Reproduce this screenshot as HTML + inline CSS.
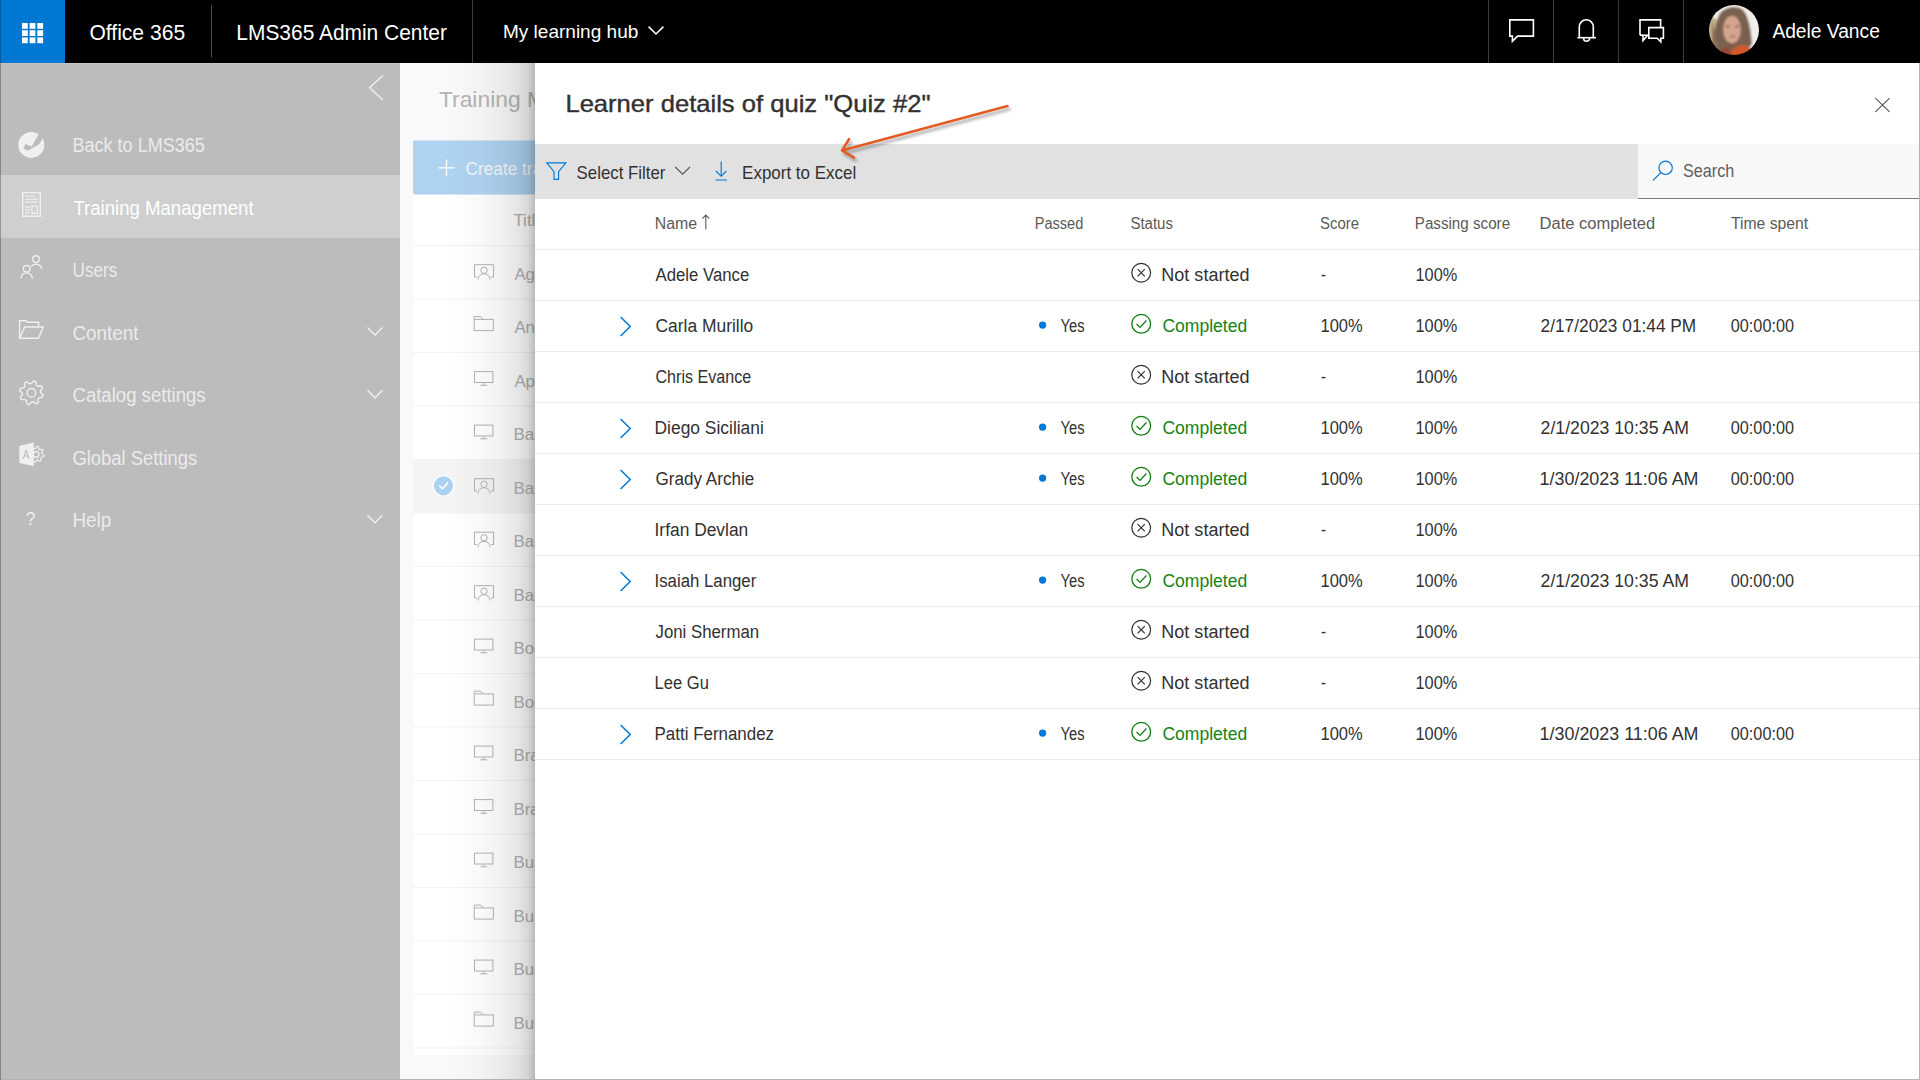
<!DOCTYPE html><html><head><meta charset="utf-8"><title>Learner details</title><style>html,body{margin:0;padding:0;width:1920px;height:1080px;overflow:hidden;background:#fff}svg{display:block;font-family:"Liberation Sans",sans-serif}</style></head><body>
<svg width="1920" height="1080" viewBox="0 0 1920 1080">
<defs>
<linearGradient id="sh" x1="0" x2="1" y1="0" y2="0">
<stop offset="0" stop-color="#000" stop-opacity="0"/>
<stop offset="0.35" stop-color="#000" stop-opacity="0.025"/>
<stop offset="0.6" stop-color="#000" stop-opacity="0.055"/>
<stop offset="0.8" stop-color="#000" stop-opacity="0.10"/>
<stop offset="0.92" stop-color="#000" stop-opacity="0.16"/>
<stop offset="1" stop-color="#000" stop-opacity="0.27"/>
</linearGradient>
<filter id="avblur" x="-20%" y="-20%" width="140%" height="140%"><feGaussianBlur stdDeviation="0.9"/></filter>
<clipPath id="avc"><circle cx="1734" cy="30" r="25"/></clipPath>
<clipPath id="cclip"><rect x="400" y="63" width="135" height="1017"/></clipPath>
<filter id="ash" x="-10%" y="-30%" width="130%" height="180%"><feGaussianBlur in="SourceAlpha" stdDeviation="1.8"/><feOffset dx="1.5" dy="2.5"/><feComponentTransfer><feFuncA type="linear" slope="0.35"/></feComponentTransfer><feMerge><feMergeNode/><feMergeNode in="SourceGraphic"/></feMerge></filter>
</defs>
<rect x="0" y="63" width="400" height="1017" fill="#bcbcbc"/>
<rect x="0" y="175" width="400" height="63" fill="#cfcfcf"/>
<rect x="0" y="63" width="400" height="1" fill="#c9c5c1"/>
<g fill="none" stroke="#f0f0f0" stroke-width="1.4">
<polyline points="383,75.5 369.5,87.8 383,100"/>
<polyline points="367.5,327.5 375,335.0 382.5,327.5"/>
<polyline points="367.5,390.2 375,397.7 382.5,390.2"/>
<polyline points="367.5,515.2 375,522.7 382.5,515.2"/>
<rect x="22.7" y="192.6" width="17.6" height="23.6" stroke-width="1.4"/>
<path d="M25 196.2H35M25 199.2H38M25 202.2H38M25 207.2H30M25 210.2H30M25 213H30" stroke-width="1.2"/>
<rect x="31.9" y="206.1" width="5.4" height="7.2" stroke-width="1.3"/>
<circle cx="26.7" cy="268.7" r="3.3"/><path d="M20.9,278.6 A5.7,5.7 0 0 1 32.3,278.6"/>
<circle cx="36" cy="259.1" r="3.3"/><path d="M31.3,266.7 A5.8,5.8 0 0 1 41.8,268.9"/>
<path d="M19.6,338.3 V320.8 H26 L27.3,322.2 H38.6 V326.6"/><path d="M19.8,338.2 L24.6,327 H43.4 L38.4,338.2 Z"/>
<polygon points="43.21,394.95 42.56,397.21 39.13,397.79 38.01,399.20 38.23,402.67 36.17,403.81 33.34,401.79 31.55,402.00 29.25,404.61 26.99,403.96 26.41,400.53 25.00,399.41 21.53,399.63 20.39,397.57 22.41,394.74 22.20,392.95 19.59,390.65 20.24,388.39 23.67,387.81 24.79,386.40 24.57,382.93 26.63,381.79 29.46,383.81 31.25,383.60 33.55,380.99 35.81,381.64 36.39,385.07 37.80,386.19 41.27,385.97 42.41,388.03 40.39,390.86 40.60,392.65" stroke-linejoin="round"/>
<circle cx="31.4" cy="392.8" r="4.3"/>
<circle cx="36" cy="454.4" r="2.9"/>
</g>
<polygon points="43.96,455.20 43.65,456.74 41.29,457.24 40.63,458.21 41.06,460.59 39.76,461.46 37.73,460.14 36.58,460.37 35.20,462.36 33.66,462.05 33.16,459.69 32.19,459.03 29.81,459.46 28.94,458.16 30.26,456.13 30.03,454.98 28.04,453.60 28.35,452.06 30.71,451.56 31.37,450.59 30.94,448.21 32.24,447.34 34.27,448.66 35.42,448.43 36.80,446.44 38.34,446.75 38.84,449.11 39.81,449.77 42.19,449.34 43.06,450.64 41.74,452.67 41.97,453.82" fill="none" stroke="#f0f0f0" stroke-width="1.2" stroke-linejoin="round"/>
<polygon points="19.35,445.9 33.67,442.4 33.67,466.3 19.35,462.9" fill="#f0f0f0"/>
<path d="M23.3,458.8 L26.1,450 L28.9,458.8 M24.2,456 H28" fill="none" stroke="#b0b0b0" stroke-width="0.9"/>
<circle cx="31.3" cy="144.9" r="13" fill="#f0f0f0"/>
<polygon points="38.56,134.61 31.63,146.58 25.33,144.06 23.45,148.47 27.54,150.67 39.19,144.37 42.34,139.02 46,133 40,128" fill="#bcbcbc"/>
<text x="25.8" y="525.2" font-size="17.5" fill="#f0f0f0">?</text>
<text x="72.50" y="152.00" font-size="20" fill="#ebebeb" textLength="132.31" lengthAdjust="spacingAndGlyphs">Back to LMS365</text><text x="73.40" y="214.50" font-size="20" fill="#ffffff" textLength="180.19" lengthAdjust="spacingAndGlyphs">Training Management</text><text x="72.54" y="277.00" font-size="20" fill="#ebebeb" textLength="44.66" lengthAdjust="spacingAndGlyphs">Users</text><text x="72.46" y="339.50" font-size="20" fill="#ebebeb" textLength="66.02" lengthAdjust="spacingAndGlyphs">Content</text><text x="72.47" y="402.00" font-size="20" fill="#ebebeb" textLength="133.13" lengthAdjust="spacingAndGlyphs">Catalog settings</text><text x="72.48" y="464.50" font-size="20" fill="#ebebeb" textLength="124.72" lengthAdjust="spacingAndGlyphs">Global Settings</text><text x="72.46" y="527.00" font-size="20" fill="#ebebeb" textLength="38.76" lengthAdjust="spacingAndGlyphs">Help</text>
<g clip-path="url(#cclip)">
<rect x="400" y="63" width="135" height="1017" fill="#f9f9f9"/>
<rect x="413" y="195" width="140" height="860" fill="#ffffff"/>
<rect x="413" y="140.5" width="140" height="54" rx="2" fill="#aed3f1"/>
<path d="M438.4,167.8H454.6M446.5,159.6V176" stroke="#fff" stroke-width="1.3"/>
<rect x="413" y="298.5" width="130" height="1" fill="#f4f4f4"/>
<rect x="413" y="352.0" width="130" height="1" fill="#f4f4f4"/>
<rect x="413" y="405.5" width="130" height="1" fill="#f4f4f4"/>
<rect x="413" y="459.0" width="130" height="1" fill="#f4f4f4"/>
<rect x="413" y="512.5" width="130" height="1" fill="#f4f4f4"/>
<rect x="413" y="566.0" width="130" height="1" fill="#f4f4f4"/>
<rect x="413" y="619.5" width="130" height="1" fill="#f4f4f4"/>
<rect x="413" y="673.0" width="130" height="1" fill="#f4f4f4"/>
<rect x="413" y="726.5" width="130" height="1" fill="#f4f4f4"/>
<rect x="413" y="780.0" width="130" height="1" fill="#f4f4f4"/>
<rect x="413" y="833.5" width="130" height="1" fill="#f4f4f4"/>
<rect x="413" y="887.0" width="130" height="1" fill="#f4f4f4"/>
<rect x="413" y="940.5" width="130" height="1" fill="#f4f4f4"/>
<rect x="413" y="994.0" width="130" height="1" fill="#f4f4f4"/>
<rect x="413" y="1047.5" width="130" height="1" fill="#f4f4f4"/>
<rect x="413" y="245" width="130" height="1" fill="#f1f1f1"/>
<rect x="413" y="459.5" width="130" height="53.5" fill="#f4f4f4"/>
<circle cx="443.5" cy="485.8" r="11" fill="#fff"/><circle cx="443.5" cy="485.8" r="9.6" fill="#abd1f1"/>
<polyline points="439.3,485.6 442.5,488.7 448,482.6" fill="none" stroke="#fff" stroke-width="1.6"/>
<g fill="none" stroke="#b3b3b3" stroke-width="1.0">
<path d="M477,277.0 H474.5 V264.7 H493.6 V277.0 H491"/><circle cx="484" cy="270.3" r="3.2"/><path d="M478,279.5 A6,5.8 0 0 1 490,279.5"/>
<path d="M474.2,330.6 V316.6 H480.8 L483.2,319.4 H493.4 V330.6 Z M474.2,319.4 H483.2"/>
<rect x="474.5" y="371.6" width="18.4" height="10.9"/><path d="M483.7,382.5 V385.1 M480.3,385.3 H487.1"/>
<rect x="474.5" y="425.1" width="18.4" height="10.9"/><path d="M483.7,436.0 V438.6 M480.3,438.8 H487.1"/>
<path d="M477,491.0 H474.5 V478.7 H493.6 V491.0 H491"/><circle cx="484" cy="484.3" r="3.2"/><path d="M478,493.5 A6,5.8 0 0 1 490,493.5"/>
<path d="M477,544.5 H474.5 V532.2 H493.6 V544.5 H491"/><circle cx="484" cy="537.8" r="3.2"/><path d="M478,547.0 A6,5.8 0 0 1 490,547.0"/>
<path d="M477,598.0 H474.5 V585.7 H493.6 V598.0 H491"/><circle cx="484" cy="591.3" r="3.2"/><path d="M478,600.5 A6,5.8 0 0 1 490,600.5"/>
<rect x="474.5" y="639.1" width="18.4" height="10.9"/><path d="M483.7,650.0 V652.6 M480.3,652.8 H487.1"/>
<path d="M474.2,705.1 V691.1 H480.8 L483.2,693.9 H493.4 V705.1 Z M474.2,693.9 H483.2"/>
<rect x="474.5" y="746.1" width="18.4" height="10.9"/><path d="M483.7,757.0 V759.6 M480.3,759.8 H487.1"/>
<rect x="474.5" y="799.6" width="18.4" height="10.9"/><path d="M483.7,810.5 V813.1 M480.3,813.3 H487.1"/>
<rect x="474.5" y="853.1" width="18.4" height="10.9"/><path d="M483.7,864.0 V866.6 M480.3,866.8 H487.1"/>
<path d="M474.2,919.1 V905.1 H480.8 L483.2,907.9 H493.4 V919.1 Z M474.2,907.9 H483.2"/>
<rect x="474.5" y="960.1" width="18.4" height="10.9"/><path d="M483.7,971.0 V973.6 M480.3,973.8 H487.1"/>
<path d="M474.2,1026.1 V1012.1 H480.8 L483.2,1014.9 H493.4 V1026.1 Z M474.2,1014.9 H483.2"/>
</g>
<text x="438.90" y="106.90" font-size="22" fill="#b4b4b4" textLength="221.72" lengthAdjust="spacingAndGlyphs">Training Management</text><text x="465.60" y="174.80" font-size="18.5" fill="#f4f8fc" textLength="112.85" lengthAdjust="spacingAndGlyphs">Create training</text><text x="513.40" y="225.70" font-size="16" fill="#b0b0b0" textLength="31.41" lengthAdjust="spacingAndGlyphs">Title</text><text x="514.40" y="279.70" font-size="17" fill="#b2b2b2" textLength="37.42" lengthAdjust="spacingAndGlyphs">Agile</text><text x="514.40" y="333.20" font-size="17" fill="#b2b2b2" textLength="121.63" lengthAdjust="spacingAndGlyphs">Announcements</text><text x="514.40" y="386.70" font-size="17" fill="#b2b2b2" textLength="38.36" lengthAdjust="spacingAndGlyphs">Apps</text><text x="513.41" y="440.20" font-size="17" fill="#b2b2b2" textLength="49.57" lengthAdjust="spacingAndGlyphs">Basics</text><text x="513.41" y="493.70" font-size="17" fill="#b2b2b2" textLength="49.57" lengthAdjust="spacingAndGlyphs">Basics</text><text x="513.41" y="547.20" font-size="17" fill="#b2b2b2" textLength="49.57" lengthAdjust="spacingAndGlyphs">Basics</text><text x="513.41" y="600.70" font-size="17" fill="#b2b2b2" textLength="49.57" lengthAdjust="spacingAndGlyphs">Basics</text><text x="513.41" y="654.20" font-size="17" fill="#b2b2b2" textLength="46.78" lengthAdjust="spacingAndGlyphs">Books</text><text x="513.41" y="707.70" font-size="17" fill="#b2b2b2" textLength="46.78" lengthAdjust="spacingAndGlyphs">Books</text><text x="513.41" y="761.20" font-size="17" fill="#b2b2b2" textLength="44.91" lengthAdjust="spacingAndGlyphs">Brand</text><text x="513.41" y="814.70" font-size="17" fill="#b2b2b2" textLength="44.91" lengthAdjust="spacingAndGlyphs">Brand</text><text x="513.41" y="868.20" font-size="17" fill="#b2b2b2" textLength="68.29" lengthAdjust="spacingAndGlyphs">Business</text><text x="513.41" y="921.70" font-size="17" fill="#b2b2b2" textLength="68.29" lengthAdjust="spacingAndGlyphs">Business</text><text x="513.41" y="975.20" font-size="17" fill="#b2b2b2" textLength="68.29" lengthAdjust="spacingAndGlyphs">Business</text><text x="513.41" y="1028.70" font-size="17" fill="#b2b2b2" textLength="68.29" lengthAdjust="spacingAndGlyphs">Business</text>
<rect x="400" y="1055" width="135" height="25" fill="#f9f9f9"/>
<rect x="450" y="63" width="85" height="1017" fill="url(#sh)"/>
</g>
<rect x="535" y="63" width="1385" height="1017" fill="#fff"/>
<rect x="535" y="144" width="1103" height="55" fill="#e1e1e1"/>
<rect x="1638" y="144" width="281" height="55" rx="2" fill="#f8f8f8"/>
<rect x="1638" y="198" width="281" height="1" fill="#7a7a7a"/>
<path d="M1875.4,98.1 L1889.6,111.9 M1889.6,98.1 L1875.4,111.9" stroke="#5a5856" stroke-width="1.15"/>
<g fill="none" stroke="#0078d4" stroke-width="1.15">
<path d="M546.8,162.8 H565.8 L558.6,171.6 V179.4 H554 V171.6 Z" stroke-linejoin="miter"/>
<path d="M721.2,161.5 V176.2 M716,171 L721.2,176.3 L726.4,171 M715.5,180 H727"/>
<circle cx="1665.6" cy="167.8" r="6.7" stroke-width="1.2"/><path d="M1660.8,172.6 L1653,180.4" stroke-width="1.3"/>
</g>
<polyline points="675.2,167 682.6,174.2 690,167" fill="none" stroke="#5a5856" stroke-width="1.1"/>
<path d="M705.8,215 V229.6 M702.3,218.6 L705.8,215 L709.3,218.6" fill="none" stroke="#5c5a58" stroke-width="1.1"/>
<rect x="535" y="249.0" width="1384" height="1" fill="#edebe9"/>
<rect x="535" y="300.0" width="1384" height="1" fill="#edebe9"/>
<rect x="535" y="351.0" width="1384" height="1" fill="#edebe9"/>
<rect x="535" y="402.0" width="1384" height="1" fill="#edebe9"/>
<rect x="535" y="453.0" width="1384" height="1" fill="#edebe9"/>
<rect x="535" y="504.0" width="1384" height="1" fill="#edebe9"/>
<rect x="535" y="555.0" width="1384" height="1" fill="#edebe9"/>
<rect x="535" y="606.0" width="1384" height="1" fill="#edebe9"/>
<rect x="535" y="657.0" width="1384" height="1" fill="#edebe9"/>
<rect x="535" y="708.0" width="1384" height="1" fill="#edebe9"/>
<rect x="535" y="759.0" width="1384" height="1" fill="#edebe9"/>
<circle cx="1141.2" cy="272.8" r="9.4" fill="none" stroke="#323130" stroke-width="1.2"/>
<path d="M1137.6,269.2 L1144.8,276.4 M1144.8,269.2 L1137.6,276.4" stroke="#323130" stroke-width="1.2"/>
<polyline points="620.6,317.0 630.2,326.5 620.6,336.0" fill="none" stroke="#0078d4" stroke-width="1.5"/>
<circle cx="1042.6" cy="325.1" r="3.6" fill="#0078d4"/>
<circle cx="1141.2" cy="323.8" r="9.4" fill="none" stroke="#107c10" stroke-width="1.3"/>
<polyline points="1136.6,324.0 1140,327.4 1146.4,320.5" fill="none" stroke="#107c10" stroke-width="1.3"/>
<circle cx="1141.2" cy="374.8" r="9.4" fill="none" stroke="#323130" stroke-width="1.2"/>
<path d="M1137.6,371.2 L1144.8,378.4 M1144.8,371.2 L1137.6,378.4" stroke="#323130" stroke-width="1.2"/>
<polyline points="620.6,419.0 630.2,428.5 620.6,438.0" fill="none" stroke="#0078d4" stroke-width="1.5"/>
<circle cx="1042.6" cy="427.1" r="3.6" fill="#0078d4"/>
<circle cx="1141.2" cy="425.8" r="9.4" fill="none" stroke="#107c10" stroke-width="1.3"/>
<polyline points="1136.6,426.0 1140,429.4 1146.4,422.5" fill="none" stroke="#107c10" stroke-width="1.3"/>
<polyline points="620.6,470.0 630.2,479.5 620.6,489.0" fill="none" stroke="#0078d4" stroke-width="1.5"/>
<circle cx="1042.6" cy="478.1" r="3.6" fill="#0078d4"/>
<circle cx="1141.2" cy="476.8" r="9.4" fill="none" stroke="#107c10" stroke-width="1.3"/>
<polyline points="1136.6,477.0 1140,480.4 1146.4,473.5" fill="none" stroke="#107c10" stroke-width="1.3"/>
<circle cx="1141.2" cy="527.8" r="9.4" fill="none" stroke="#323130" stroke-width="1.2"/>
<path d="M1137.6,524.2 L1144.8,531.4 M1144.8,524.2 L1137.6,531.4" stroke="#323130" stroke-width="1.2"/>
<polyline points="620.6,572.0 630.2,581.5 620.6,591.0" fill="none" stroke="#0078d4" stroke-width="1.5"/>
<circle cx="1042.6" cy="580.1" r="3.6" fill="#0078d4"/>
<circle cx="1141.2" cy="578.8" r="9.4" fill="none" stroke="#107c10" stroke-width="1.3"/>
<polyline points="1136.6,579.0 1140,582.4 1146.4,575.5" fill="none" stroke="#107c10" stroke-width="1.3"/>
<circle cx="1141.2" cy="629.8" r="9.4" fill="none" stroke="#323130" stroke-width="1.2"/>
<path d="M1137.6,626.2 L1144.8,633.4 M1144.8,626.2 L1137.6,633.4" stroke="#323130" stroke-width="1.2"/>
<circle cx="1141.2" cy="680.8" r="9.4" fill="none" stroke="#323130" stroke-width="1.2"/>
<path d="M1137.6,677.2 L1144.8,684.4 M1144.8,677.2 L1137.6,684.4" stroke="#323130" stroke-width="1.2"/>
<polyline points="620.6,725.0 630.2,734.5 620.6,744.0" fill="none" stroke="#0078d4" stroke-width="1.5"/>
<circle cx="1042.6" cy="733.1" r="3.6" fill="#0078d4"/>
<circle cx="1141.2" cy="731.8" r="9.4" fill="none" stroke="#107c10" stroke-width="1.3"/>
<polyline points="1136.6,732.0 1140,735.4 1146.4,728.5" fill="none" stroke="#107c10" stroke-width="1.3"/>
<text x="565.43" y="111.90" font-size="24" fill="#323130" textLength="365.12" lengthAdjust="spacingAndGlyphs" stroke="#323130" stroke-width="0.4">Learner details of quiz "Quiz #2"</text><text x="576.60" y="179.00" font-size="18.5" fill="#323130" textLength="88.75" lengthAdjust="spacingAndGlyphs">Select Filter</text><text x="742.08" y="179.00" font-size="18.5" fill="#323130" textLength="114.14" lengthAdjust="spacingAndGlyphs">Export to Excel</text><text x="1683.00" y="176.90" font-size="18" fill="#605e5c" textLength="51.21" lengthAdjust="spacingAndGlyphs">Search</text><text x="654.71" y="228.80" font-size="16" fill="#5c5a58" textLength="42.39" lengthAdjust="spacingAndGlyphs">Name</text><text x="1034.69" y="228.80" font-size="16" fill="#5c5a58" textLength="48.63" lengthAdjust="spacingAndGlyphs">Passed</text><text x="1130.40" y="228.80" font-size="16" fill="#5c5a58" textLength="42.60" lengthAdjust="spacingAndGlyphs">Status</text><text x="1320.00" y="228.80" font-size="16" fill="#5c5a58" textLength="38.91" lengthAdjust="spacingAndGlyphs">Score</text><text x="1414.75" y="228.80" font-size="16" fill="#5c5a58" textLength="95.35" lengthAdjust="spacingAndGlyphs">Passing score</text><text x="1539.57" y="228.80" font-size="16" fill="#5c5a58" textLength="115.56" lengthAdjust="spacingAndGlyphs">Date completed</text><text x="1731.00" y="228.80" font-size="16" fill="#5c5a58" textLength="77.16" lengthAdjust="spacingAndGlyphs">Time spent</text><text x="655.50" y="280.80" font-size="18" fill="#323130" textLength="93.81" lengthAdjust="spacingAndGlyphs">Adele Vance</text><text x="1161.30" y="280.80" font-size="18" fill="#323130" textLength="88.21" lengthAdjust="spacingAndGlyphs">Not started</text><text x="1321.00" y="280.80" font-size="18" fill="#323130" textLength="5.00" lengthAdjust="spacingAndGlyphs">-</text><text x="1415.49" y="280.80" font-size="18" fill="#323130" textLength="41.81" lengthAdjust="spacingAndGlyphs">100%</text><text x="655.50" y="331.80" font-size="18" fill="#323130" textLength="97.81" lengthAdjust="spacingAndGlyphs">Carla Murillo</text><text x="1060.50" y="331.80" font-size="18" fill="#323130" textLength="24.00" lengthAdjust="spacingAndGlyphs">Yes</text><text x="1162.40" y="331.80" font-size="18" fill="#168316" textLength="84.78" lengthAdjust="spacingAndGlyphs">Completed</text><text x="1320.48" y="331.80" font-size="18" fill="#323130" textLength="42.22" lengthAdjust="spacingAndGlyphs">100%</text><text x="1540.60" y="331.80" font-size="18" fill="#323130" textLength="155.65" lengthAdjust="spacingAndGlyphs">2/17/2023 01:44 PM</text><text x="1730.80" y="331.80" font-size="18" fill="#323130" textLength="63.21" lengthAdjust="spacingAndGlyphs">00:00:00</text><text x="1415.49" y="331.80" font-size="18" fill="#323130" textLength="41.81" lengthAdjust="spacingAndGlyphs">100%</text><text x="655.50" y="382.80" font-size="18" fill="#323130" textLength="95.71" lengthAdjust="spacingAndGlyphs">Chris Evance</text><text x="1161.30" y="382.80" font-size="18" fill="#323130" textLength="88.21" lengthAdjust="spacingAndGlyphs">Not started</text><text x="1321.00" y="382.80" font-size="18" fill="#323130" textLength="5.00" lengthAdjust="spacingAndGlyphs">-</text><text x="1415.49" y="382.80" font-size="18" fill="#323130" textLength="41.81" lengthAdjust="spacingAndGlyphs">100%</text><text x="654.53" y="433.80" font-size="18" fill="#323130" textLength="109.33" lengthAdjust="spacingAndGlyphs">Diego Siciliani</text><text x="1060.50" y="433.80" font-size="18" fill="#323130" textLength="24.00" lengthAdjust="spacingAndGlyphs">Yes</text><text x="1162.40" y="433.80" font-size="18" fill="#168316" textLength="84.78" lengthAdjust="spacingAndGlyphs">Completed</text><text x="1320.48" y="433.80" font-size="18" fill="#323130" textLength="42.22" lengthAdjust="spacingAndGlyphs">100%</text><text x="1540.60" y="433.80" font-size="18" fill="#323130" textLength="148.37" lengthAdjust="spacingAndGlyphs">2/1/2023 10:35 AM</text><text x="1730.80" y="433.80" font-size="18" fill="#323130" textLength="63.21" lengthAdjust="spacingAndGlyphs">00:00:00</text><text x="1415.49" y="433.80" font-size="18" fill="#323130" textLength="41.81" lengthAdjust="spacingAndGlyphs">100%</text><text x="655.50" y="484.80" font-size="18" fill="#323130" textLength="98.81" lengthAdjust="spacingAndGlyphs">Grady Archie</text><text x="1060.50" y="484.80" font-size="18" fill="#323130" textLength="24.00" lengthAdjust="spacingAndGlyphs">Yes</text><text x="1162.40" y="484.80" font-size="18" fill="#168316" textLength="84.78" lengthAdjust="spacingAndGlyphs">Completed</text><text x="1320.48" y="484.80" font-size="18" fill="#323130" textLength="42.22" lengthAdjust="spacingAndGlyphs">100%</text><text x="1539.61" y="484.80" font-size="18" fill="#323130" textLength="158.87" lengthAdjust="spacingAndGlyphs">1/30/2023 11:06 AM</text><text x="1730.80" y="484.80" font-size="18" fill="#323130" textLength="63.21" lengthAdjust="spacingAndGlyphs">00:00:00</text><text x="1415.49" y="484.80" font-size="18" fill="#323130" textLength="41.81" lengthAdjust="spacingAndGlyphs">100%</text><text x="654.53" y="535.80" font-size="18" fill="#323130" textLength="93.74" lengthAdjust="spacingAndGlyphs">Irfan Devlan</text><text x="1161.30" y="535.80" font-size="18" fill="#323130" textLength="88.21" lengthAdjust="spacingAndGlyphs">Not started</text><text x="1321.00" y="535.80" font-size="18" fill="#323130" textLength="5.00" lengthAdjust="spacingAndGlyphs">-</text><text x="1415.49" y="535.80" font-size="18" fill="#323130" textLength="41.81" lengthAdjust="spacingAndGlyphs">100%</text><text x="654.57" y="586.80" font-size="18" fill="#323130" textLength="101.73" lengthAdjust="spacingAndGlyphs">Isaiah Langer</text><text x="1060.50" y="586.80" font-size="18" fill="#323130" textLength="24.00" lengthAdjust="spacingAndGlyphs">Yes</text><text x="1162.40" y="586.80" font-size="18" fill="#168316" textLength="84.78" lengthAdjust="spacingAndGlyphs">Completed</text><text x="1320.48" y="586.80" font-size="18" fill="#323130" textLength="42.22" lengthAdjust="spacingAndGlyphs">100%</text><text x="1540.60" y="586.80" font-size="18" fill="#323130" textLength="148.37" lengthAdjust="spacingAndGlyphs">2/1/2023 10:35 AM</text><text x="1730.80" y="586.80" font-size="18" fill="#323130" textLength="63.21" lengthAdjust="spacingAndGlyphs">00:00:00</text><text x="1415.49" y="586.80" font-size="18" fill="#323130" textLength="41.81" lengthAdjust="spacingAndGlyphs">100%</text><text x="655.50" y="637.80" font-size="18" fill="#323130" textLength="103.64" lengthAdjust="spacingAndGlyphs">Joni Sherman</text><text x="1161.30" y="637.80" font-size="18" fill="#323130" textLength="88.21" lengthAdjust="spacingAndGlyphs">Not started</text><text x="1321.00" y="637.80" font-size="18" fill="#323130" textLength="5.00" lengthAdjust="spacingAndGlyphs">-</text><text x="1415.49" y="637.80" font-size="18" fill="#323130" textLength="41.81" lengthAdjust="spacingAndGlyphs">100%</text><text x="654.58" y="688.80" font-size="18" fill="#323130" textLength="54.35" lengthAdjust="spacingAndGlyphs">Lee Gu</text><text x="1161.30" y="688.80" font-size="18" fill="#323130" textLength="88.21" lengthAdjust="spacingAndGlyphs">Not started</text><text x="1321.00" y="688.80" font-size="18" fill="#323130" textLength="5.00" lengthAdjust="spacingAndGlyphs">-</text><text x="1415.49" y="688.80" font-size="18" fill="#323130" textLength="41.81" lengthAdjust="spacingAndGlyphs">100%</text><text x="654.56" y="739.80" font-size="18" fill="#323130" textLength="119.54" lengthAdjust="spacingAndGlyphs">Patti Fernandez</text><text x="1060.50" y="739.80" font-size="18" fill="#323130" textLength="24.00" lengthAdjust="spacingAndGlyphs">Yes</text><text x="1162.40" y="739.80" font-size="18" fill="#168316" textLength="84.78" lengthAdjust="spacingAndGlyphs">Completed</text><text x="1320.48" y="739.80" font-size="18" fill="#323130" textLength="42.22" lengthAdjust="spacingAndGlyphs">100%</text><text x="1539.61" y="739.80" font-size="18" fill="#323130" textLength="158.87" lengthAdjust="spacingAndGlyphs">1/30/2023 11:06 AM</text><text x="1730.80" y="739.80" font-size="18" fill="#323130" textLength="63.21" lengthAdjust="spacingAndGlyphs">00:00:00</text><text x="1415.49" y="739.80" font-size="18" fill="#323130" textLength="41.81" lengthAdjust="spacingAndGlyphs">100%</text>
<rect x="1919" y="63" width="1" height="1017" fill="#b4b4b4"/>
<rect x="0" y="1079" width="1920" height="1" fill="#b4b4b4"/>
<rect x="0" y="0" width="1" height="1080" fill="#000" fill-opacity="0.28"/>
<rect x="0" y="0" width="1920" height="63" fill="#000"/>
<rect x="0" y="0" width="65" height="63" fill="#0078d4"/>
<rect x="0" y="0" width="1" height="63" fill="#005a9e"/>
<rect x="22" y="23" width="5.8" height="5.8" fill="#fff"/>
<rect x="29.6" y="23" width="5.8" height="5.8" fill="#fff"/>
<rect x="37.3" y="23" width="5.8" height="5.8" fill="#fff"/>
<rect x="22" y="30.2" width="5.8" height="5.8" fill="#fff"/>
<rect x="29.6" y="30.2" width="5.8" height="5.8" fill="#fff"/>
<rect x="37.3" y="30.2" width="5.8" height="5.8" fill="#fff"/>
<rect x="22" y="37.4" width="5.8" height="5.8" fill="#fff"/>
<rect x="29.6" y="37.4" width="5.8" height="5.8" fill="#fff"/>
<rect x="37.3" y="37.4" width="5.8" height="5.8" fill="#fff"/>
<rect x="211.0" y="5" width="1" height="52.5" fill="#4a4a4a"/>
<rect x="472.0" y="0" width="1" height="63" fill="#3c3c3c"/>
<rect x="1488.0" y="0" width="1" height="63" fill="#3c3c3c"/>
<rect x="1553.0" y="0" width="1" height="63" fill="#3c3c3c"/>
<rect x="1618.0" y="0" width="1" height="63" fill="#3c3c3c"/>
<rect x="1683.0" y="0" width="1" height="63" fill="#3c3c3c"/>
<g fill="none" stroke="#fff" stroke-width="1.6">
<path d="M1509.8,19.9 H1533.4 V36.1 H1517.6 L1512.4,41.3 V36.1 H1509.8 Z"/>
<path d="M1579.3,37.6 V26.8 A7,7 0 0 1 1593.3,26.8 V37.6"/><path d="M1577.4,37.7 H1596"/><path d="M1583.6,38.2 A3,3 0 0 0 1589.6,38.2"/>
<path d="M1648.4,35.2 H1643 V40.6 L1647.6,35.2 M1640,35.2 V19.9 H1660.6 V27.4"/>
<path d="M1648.8,27.6 H1663.4 V38.2 H1660.8 V41.8 L1657.2,38.2 H1648.8 Z"/>
<path d="M1640,35.2 H1643"/>
</g>
<polyline points="648.6,26.6 656,34 663.4,26.6" fill="none" stroke="#fff" stroke-width="1.5"/>
<g clip-path="url(#avc)"><g filter="url(#avblur)">
<rect x="1705" y="1" width="58" height="58" fill="#f1eeea"/>
<ellipse cx="1713" cy="34" rx="6" ry="17" fill="#c2b28e"/>
<path d="M1714,58 C1713,44 1714,26 1719,15 C1724,6 1738,5 1743,10 C1750,18 1751,34 1752,44 C1748,50 1742,50 1738,49 L1724,58 Z" fill="#7a604f"/>
<path d="M1712,20 C1715,30 1716,45 1722,58 L1712,58 Z" fill="#8a7058"/>
<ellipse cx="1732" cy="29.5" rx="8.8" ry="13.8" fill="#d4a68e"/>
<ellipse cx="1728" cy="26.5" rx="2.2" ry="1" fill="#7b5c52"/><ellipse cx="1737" cy="26.5" rx="2.2" ry="1" fill="#7b5c52"/>
<ellipse cx="1732.5" cy="36.5" rx="3" ry="1.1" fill="#9a6d6e"/>
<path d="M1726,60 C1730,50 1736,46 1742,45 C1748,45 1754,49 1758,60 Z" fill="#d2582c"/>
<path d="M1716,60 C1718,52 1722,48 1728,47 L1734,60 Z" fill="#9a4434"/>
</g></g>
<text x="89.42" y="39.80" font-size="21.5" fill="#ffffff" textLength="95.74" lengthAdjust="spacingAndGlyphs">Office 365</text><text x="236.33" y="39.80" font-size="21.5" fill="#ffffff" textLength="210.52" lengthAdjust="spacingAndGlyphs">LMS365 Admin Center</text><text x="502.97" y="37.90" font-size="18.5" fill="#ffffff" textLength="135.32" lengthAdjust="spacingAndGlyphs">My learning hub</text><text x="1772.40" y="37.70" font-size="20" fill="#ffffff" textLength="107.42" lengthAdjust="spacingAndGlyphs">Adele Vance</text>
<g filter="url(#ash)" fill="none" stroke="#e35b26" stroke-width="2.6" stroke-linecap="round" stroke-linejoin="round">
<path d="M1007.5,106 L842,150.5 M849,139.2 L842,150.5 L854,157.6"/>
</g>
</svg></body></html>
